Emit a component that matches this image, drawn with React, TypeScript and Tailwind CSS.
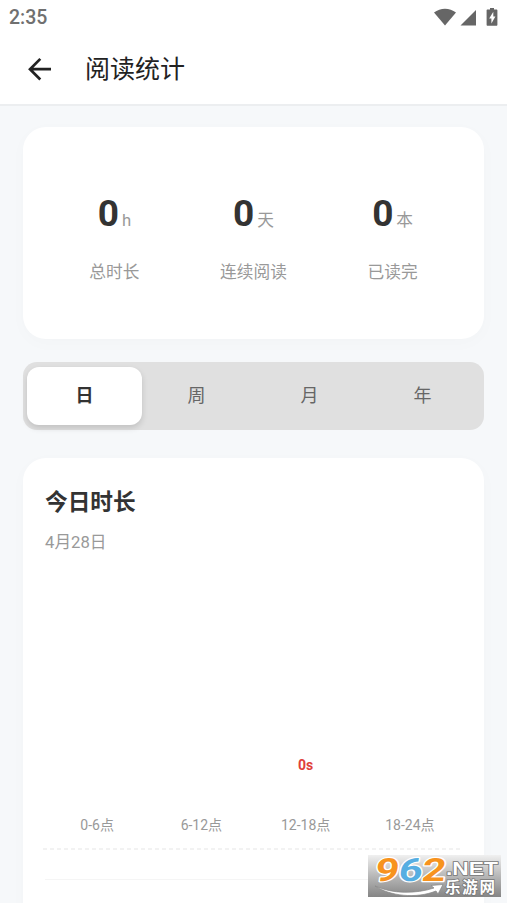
import clsx from 'clsx'

const stats = [
  { value: '0', unit: 'h', label: '总时长' },
  { value: '0', unit: '天', label: '连续阅读' },
  { value: '0', unit: '本', label: '已读完' },
]

const tabs = ['日', '周', '月', '年']

const slots = [
  { label: '0-6点' },
  { label: '6-12点' },
  { label: '12-18点', value: '0s' },
  { label: '18-24点' },
]

function StatusBar() {
  return (
    <div className="flex h-[35px] items-center justify-between px-[9px] pt-px">
      <span className="text-[19.5px] font-medium leading-none text-[#707070]">2:35</span>
      <svg className="h-[20px] w-[64px]" viewBox="0 0 64 20" fill="#666">
        <path d="M0 4.600C6.400-.6 15.600-.6 22 4.600L11 17.500z" />
        <path d="M42 2v15.500H26.500z" />
        <path
          fillRule="evenodd"
          d="M56 0h4v1.500h2.400c.6 0 1 .4 1 1v14.300c0 .6-.4 1-1 1h-8.800c-.6 0-1-.4-1-1V2.500c0-.6.4-1 1-1H56zM59.300 3.800 55.200 10.500h2.200v4.900l4-6.800h-2.100z"
        />
      </svg>
    </div>
  )
}

function Header() {
  return (
    <div className="flex h-[71px] items-center border-b-2 border-[#eceef0] pl-[25px]">
      <svg className="h-[30px] w-[30px]" viewBox="0 0 30 30" fill="none" stroke="#222" strokeWidth="2.700">
        <path d="M26 14.200H5M15.300 3.900 5 14.200l10.300 10.300" />
      </svg>
      <h1 className="ml-[30px] text-[25px] leading-[36px] text-[#222]">阅读统计</h1>
    </div>
  )
}

function Summary() {
  return (
    <section className="flex h-[212px] justify-around rounded-[23px] bg-white px-[26px] pt-[62px] shadow-[0_4px_18px_rgba(0,0,0,0.02)]">
      {stats.map((s) => (
        <div key={s.label} className="flex flex-col items-center">
          <div className="flex h-[50px] items-baseline">
            <span className="text-[37px] font-bold leading-[50px] text-[#333]">{s.value}</span>
            <span className="ml-[3px] text-[16.700px] leading-[24px] text-[#999]">{s.unit}</span>
          </div>
          <span className="mt-[22px] text-[16.700px] leading-[24px] text-[#999]">{s.label}</span>
        </div>
      ))}
    </section>
  )
}

function Tabs() {
  return (
    <div className="mt-[23px] flex h-[68px] rounded-[14px] bg-[#e0e0e0] p-[5px] pl-[4px]">
      {tabs.map((tab, i) => (
        <button
          key={tab}
          className={clsx(
            'flex h-[58px] items-center justify-center rounded-[12px] pb-[2px] text-[18px]',
            i === 0
              ? 'w-[115px] bg-white font-bold text-[#333] shadow-[0_3px_6px_rgba(0,0,0,0.14)]'
              : 'flex-1 text-[#666]',
            i === 1 && '-ml-[2px]',
          )}
        >
          {tab}
        </button>
      ))}
    </div>
  )
}

function TodayChart() {
  return (
    <section className="mt-[28px] h-[480px] rounded-[23px] bg-white px-[22px] pt-[28px] shadow-[0_4px_18px_rgba(0,0,0,0.02)]">
      <h2 className="text-[22.700px] font-bold leading-[34px] text-[#333]">今日时长</h2>
      <p className="mt-[11px] text-[16.700px] leading-[24px] text-[#999]">4月28日</p>
      <div className="mt-[199px] grid grid-cols-4 text-center">
        {slots.map((s) => (
          <div key={s.label}>
            <div className="h-[22px] text-[14px] font-bold leading-[22px] text-[#e0403a]">{s.value}</div>
            <div className="mt-[39px] text-[14px] leading-[20px] text-[#999]">{s.label}</div>
          </div>
        ))}
      </div>
      <svg className="-ml-[2px] mt-[13px] block h-[2px] w-[420px]">
        <path d="M0 1H420" stroke="#eee" strokeWidth="1.500" strokeDasharray="4 3" />
      </svg>
      <div className="mt-[29px] h-px bg-[#f5f5f5]" />
    </section>
  )
}

function Watermark() {
  return (
    <svg className="absolute left-[368px] top-[850px] h-[47px] w-[133px] overflow-visible" viewBox="0 -5 133 47">
      <defs>
        <linearGradient id="plate" x1="0" y1="0" x2="0" y2="1">
          <stop offset="0" stopColor="#f0f0f0" />
          <stop offset="0.45" stopColor="#bdbdbd" />
          <stop offset="1" stopColor="#858585" />
        </linearGradient>
      </defs>
      <rect width="133" height="42" fill="url(#plate)" />
      <g
        transform="translate(6 26) skewX(-8) scale(1.300 1)"
        fontFamily="Roboto, sans-serif"
        fontWeight="bold"
        fontSize="32"
        stroke="#fff"
        strokeWidth="2.500"
        paintOrder="stroke"
        strokeLinejoin="round"
      >
        <text x="0" y="0" fill="#f7931e">9</text>
        <text x="18" y="0" fill="#56aee2">6</text>
        <text x="36" y="0" fill="#f7931e">2</text>
      </g>
      <path
        d="M7 31C24 39 48 39 66 33L63 30.500 75 29.500 70 39 68 36C48 44 22 41 7 31z"
        fill="#fff"
        stroke="#858585"
        strokeWidth="0.700"
      />
      <g fill="#fff" fontWeight="bold" stroke="#777" strokeWidth="1.500" paintOrder="stroke">
        <text x="78" y="20" fontFamily="'Liberation Sans', sans-serif" fontSize="18" textLength="52" lengthAdjust="spacingAndGlyphs">
          .NET
        </text>
        <text x="77" y="38" fontFamily="'Noto Sans CJK SC', sans-serif" fontSize="15.500" textLength="50">
          乐游网
        </text>
      </g>
    </svg>
  )
}

export default function App() {
  return (
    <div className="relative h-[903px] w-[507px] overflow-hidden bg-[#f6f8fa] font-[Roboto,'Noto_Sans_CJK_SC',sans-serif]">
      <div className="bg-white">
        <StatusBar />
        <Header />
      </div>
      <main className="px-[23px] pt-[21px]">
        <Summary />
        <Tabs />
        <TodayChart />
      </main>
      <Watermark />
    </div>
  )
}
